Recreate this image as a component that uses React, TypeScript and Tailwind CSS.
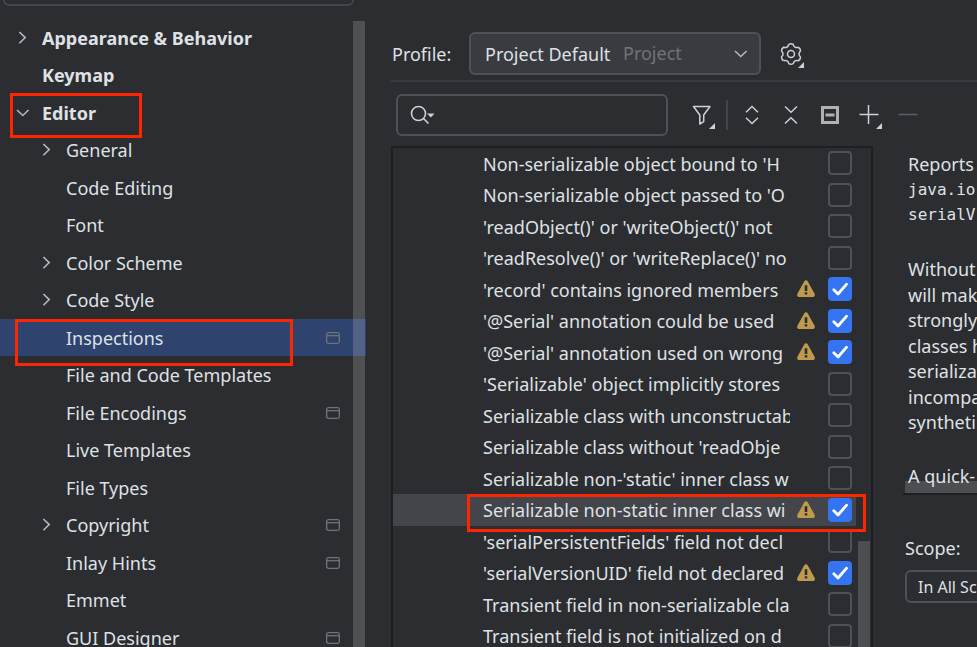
import { useState } from "react";
import type { ReactNode } from "react";

type TreeItem = {
  label: string;
  level: 0 | 1;
  arrow?: "right" | "down";
  project?: boolean;
  selected?: boolean;
  marked?: boolean;
};

const tree: TreeItem[] = [
  { label: "Appearance & Behavior", level: 0, arrow: "right" },
  { label: "Keymap", level: 0 },
  { label: "Editor", level: 0, arrow: "down", marked: true },
  { label: "General", level: 1, arrow: "right" },
  { label: "Code Editing", level: 1 },
  { label: "Font", level: 1 },
  { label: "Color Scheme", level: 1, arrow: "right" },
  { label: "Code Style", level: 1, arrow: "right" },
  { label: "Inspections", level: 1, project: true, selected: true, marked: true },
  { label: "File and Code Templates", level: 1 },
  { label: "File Encodings", level: 1, project: true },
  { label: "Live Templates", level: 1 },
  { label: "File Types", level: 1 },
  { label: "Copyright", level: 1, arrow: "right", project: true },
  { label: "Inlay Hints", level: 1, project: true },
  { label: "Emmet", level: 1 },
  { label: "GUI Designer", level: 1, project: true },
];

type Inspection = { label: string; on?: boolean; selected?: boolean };

const inspections: Inspection[] = [
  { label: "Non-serializable object bound to 'H" },
  { label: "Non-serializable object passed to 'O" },
  { label: "'readObject()' or 'writeObject()' not" },
  { label: "'readResolve()' or 'writeReplace()' no" },
  { label: "'record' contains ignored members", on: true },
  { label: "'@Serial' annotation could be used", on: true },
  { label: "'@Serial' annotation used on wrong", on: true },
  { label: "'Serializable' object implicitly stores" },
  { label: "Serializable class with unconstructab" },
  { label: "Serializable class without 'readObje" },
  { label: "Serializable non-'static' inner class w" },
  { label: "Serializable non-static inner class wi", on: true, selected: true },
  { label: "'serialPersistentFields' field not decl" },
  { label: "'serialVersionUID' field not declared", on: true },
  { label: "Transient field in non-serializable cla" },
  { label: "Transient field is not initialized on d" },
];

const description = [
  { text: "Reports" },
  { text: "java.io", code: true },
  { text: "serialV", code: true },
  { text: "" },
  { text: "Without" },
  { text: "will mak" },
  { text: "strongly" },
  { text: "classes h" },
  { text: "serializa" },
  { text: "incompa" },
  { text: "syntheti" },
  { text: "" },
  { text: "A quick-" },
];

function Chevron({ dir }: { dir: "right" | "down" }) {
  return (
    <svg width="14" height="14" viewBox="0 0 14 14" fill="none" stroke="#b4b8bf" strokeWidth="1.6" className="shrink-0" aria-hidden="true">
      <path d={dir === "right" ? "M3.4 1 9.2 6.6l-5.800 5.700" : "M1 4 6.800 9.500 12.600 4"} />
    </svg>
  );
}

function ProjectIcon() {
  return (
    <svg width="14" height="12" viewBox="0 0 14 12" fill="none" stroke="#6f737a" strokeWidth="1.3" aria-hidden="true">
      <rect x="0.65" y="0.65" width="12.7" height="10.7" rx="1.8" />
      <path d="M1 3.7h12" />
    </svg>
  );
}

function Warning() {
  return (
    <svg width="18" height="18" viewBox="0 0 18 18" className="mb-px" role="img" aria-label="Warning">
      <path d="M7.3 1.300a1.900 1.900 0 0 1 3.400 0l6.900 12.500c.8 1.500-.2 3.200-1.800 3.200H2.200C.6 17-.4 15.300.4 13.800z" fill="#bf9a4c" />
      <path d="M7.700 5.200h2.600v5.700H7.700zM7.700 12.200h2.600v2.300H7.700z" fill="#2b2d30" />
    </svg>
  );
}

const gearTurns = [0, 60, 120, 180, 240, 300];

function IconButton({ label, menu, children }: { label: string; menu?: boolean; children: ReactNode }) {
  return (
    <button type="button" aria-label={label} className="relative flex size-[30px] shrink-0 items-center justify-center">
      <svg width="24" height="24" viewBox="0 0 24 24" fill="none" stroke="#ced0d6" strokeWidth="1.5" aria-hidden="true">
        {children}
      </svg>
      {menu && (
        <svg width="6" height="6" viewBox="0 0 6 6" className="absolute right-0.5 bottom-px" aria-hidden="true">
          <path d="M6 0v6H0z" fill="#ced0d6" />
        </svg>
      )}
    </button>
  );
}

function Sidebar() {
  return (
    <nav aria-label="Settings" className="relative flex w-[366px] shrink-0 flex-col">
      <input aria-label="Search settings" className="-mt-7 mr-3 ml-[3px] h-[34px] shrink-0 rounded-md border-2 border-[#43454a] bg-transparent px-3 outline-none" />
      <ul className="mt-[13px]">
        {tree.map((item) => (
          <li key={item.label} className={`relative odd:h-[37px] even:h-[38px] ${item.selected ? "bg-[#2e436e]" : ""}`}>
            <button
              type="button"
              className={`flex h-full w-full items-center gap-3 pr-[26px] text-left ${item.level === 0 ? "pl-4 font-bold" : "pl-10"}`}
            >
              <span className="flex w-[14px] shrink-0">{item.arrow && <Chevron dir={item.arrow} />}</span>
              <span className="flex-1 whitespace-nowrap">{item.label}</span>
              {item.project && <ProjectIcon />}
            </button>
            {item.marked && item.level === 0 && (
              <span className="pointer-events-none absolute -top-px left-2.5 z-10 h-[45px] w-[132px] border-3 border-[#fe2600]" />
            )}
            {item.marked && item.level === 1 && (
              <span className="pointer-events-none absolute top-0 left-[15px] z-10 h-[47px] w-[278px] border-3 border-[#fe2600]" />
            )}
          </li>
        ))}
      </ul>
      <div className="absolute top-[21px] right-px bottom-0 w-3 bg-white/17" />
    </nav>
  );
}

function InspectionRow({ item }: { item: Inspection }) {
  const [on, setOn] = useState(Boolean(item.on));
  return (
    <li className="relative odd:h-[31px] even:h-8">
      <label className={`mr-[15px] flex h-full items-center pr-1 pl-[90px] ${item.selected ? "bg-[#43454a]" : ""}`}>
        <span className="min-w-0 flex-1 overflow-hidden whitespace-nowrap">{item.label}</span>
        <span className="flex w-[38px] shrink-0 justify-center pr-1.5">{item.on && <Warning />}</span>
        <span className="relative mb-px flex size-6 shrink-0">
          <input
            type="checkbox"
            checked={on}
            onChange={() => setOn(!on)}
            className="size-6 appearance-none rounded-[4px] border-2 border-[#4e5157] checked:border-[#3574f0] checked:bg-[#3574f0]"
          />
          {on && (
            <svg viewBox="0 0 24 24" fill="none" stroke="#fff" strokeWidth="2.8" strokeLinecap="round" strokeLinejoin="round" className="pointer-events-none absolute inset-0 size-6" aria-hidden="true">
              <path d="M5.800 12.800 10 17l8.600-9.800" />
            </svg>
          )}
        </span>
      </label>
      {item.selected && <span className="pointer-events-none absolute top-0 right-[5px] left-[74px] z-10 h-[38px] border-3 border-[#fe2600]" />}
    </li>
  );
}

export default function App() {
  return (
    <div className="flex h-screen gap-[25px] overflow-hidden bg-[#2b2d30] font-['Noto_Sans','Open_Sans',sans-serif] text-[18px] leading-6 text-[#dfe1e5]">
      <Sidebar />
      <main className="flex min-w-0 flex-1 flex-col">
        <div className="flex h-[82px] shrink-0 items-end border-b-2 border-[#393b40] pb-[5px]">
          <label htmlFor="profile" className="mb-[9px] w-[78px] shrink-0 pl-px">Profile:</label>
          <div className="relative h-[43px] w-[292px] shrink-0">
            <select id="profile" className="size-full appearance-none rounded-md border-2 border-[#4e5157] bg-[#393b40] px-[14px] outline-none">
              <option>Project Default</option>
            </select>
            <span className="pointer-events-none absolute top-[9px] left-[154px] text-[#6f737a]">Project</span>
            <span className="pointer-events-none absolute top-[15px] right-[13px]">
              <Chevron dir="down" />
            </span>
          </div>
          <div className="mb-1.5 ml-[15px]">
            <IconButton label="Profile actions" menu>
              {gearTurns.map((turn) => (
                <path key={turn} d="M9.800 2.300Q12 1 14.200 2.300C14.800 5 16.500 6 19.300 5.200" transform={`rotate(${turn} 12 12)`} />
              ))}
              <circle cx="12" cy="12" r="3.500" />
            </IconButton>
          </div>
        </div>

        <div className="flex h-16 shrink-0 items-center pl-[5px]">
          <div className="relative mt-px h-[42px] w-[272px] shrink-0">
            <input aria-label="Search inspections" className="size-full rounded-md border-2 border-[#4e5157] bg-transparent pl-12 outline-none" />
            <svg width="26" height="20" viewBox="0 0 26 20" fill="none" stroke="#ced0d6" strokeWidth="1.600" className="pointer-events-none absolute top-[11px] left-3.5" aria-hidden="true">
              <circle cx="8.500" cy="8.500" r="7" />
              <path d="m13.500 13.500 5 5" />
              <path d="M17 8.500h7.500l-3.700 4z" fill="#ced0d6" stroke="none" />
            </svg>
          </div>
          <div className="mt-0.5 ml-[19px] flex items-center">
            <IconButton label="Filter" menu>
              <path d="M3.500 3.500h16.500l-6.300 8.500v6.700L9.800 21v-9z" strokeLinejoin="round" />
            </IconButton>
            <span className="mx-[9px] h-[30px] w-0.5 bg-[#43454a]" />
            <div className="flex gap-[9px]">
              <IconButton label="Expand all">
                <path d="M6 9.200 12 3.500l6 5.700M6 14.800l6 5.700 6-5.700" />
              </IconButton>
              <IconButton label="Collapse all">
                <path d="M6 3.500l6 5.700 6-5.700M6 20.500l6-5.700 6 5.700" />
              </IconButton>
              <IconButton label="Reset to empty">
                <path d="M4.500 4.500h15v15h-15z" stroke="#afb1b3" strokeWidth="3" />
                <path d="M7.500 12h9" stroke="#afb1b3" strokeWidth="3" />
              </IconButton>
              <IconButton label="Add" menu>
                <path d="M2.500 11.500h19M11.500 2v19" />
              </IconButton>
              <IconButton label="Remove">
                <path d="M2.500 11.500h19" stroke="#5a5d63" />
              </IconButton>
            </div>
          </div>
        </div>

        <div className="flex min-h-0 flex-1 gap-[30px]">
          <section aria-label="Inspections" className="relative w-[482px] shrink-0 overflow-hidden border-2 border-b-0 border-[#1e1f22]">
            <ul>
              {inspections.map((item) => (
                <InspectionRow key={item.label} item={item} />
              ))}
            </ul>
            <div className="absolute top-[393px] right-px bottom-0 w-3 bg-[#4d4e51]" />
          </section>

          <section aria-label="Description" className="min-w-0 flex-1">
            <div className="relative h-[349px] overflow-hidden border-b-2 border-[#1e1f22]">
              <div className="absolute right-0 bottom-0 left-0.5 h-3 bg-[#4d4e51]" />
              <div className="relative pt-1.5 pl-[5px] whitespace-nowrap">
                {description.map((line, i) =>
                  line.text === "" ? (
                    <div key={i} className="h-7" />
                  ) : (
                    <p key={i} className={`odd:h-[26px] even:h-[25px] ${line.code ? "font-['DejaVu_Sans_Mono',monospace] text-[16px]" : ""}`}>
                      {line.text}
                    </p>
                  ),
                )}
              </div>
            </div>
            <div className="pt-[41px] pl-0.5">
              <label htmlFor="scope" className="block">Scope:</label>
              <select id="scope" className="mt-2.5 h-[33px] w-[180px] appearance-none rounded-md border-2 border-[#4e5157] bg-transparent px-[11px] text-[16px] outline-none">
                <option>In All Scopes</option>
              </select>
            </div>
          </section>
        </div>
      </main>
    </div>
  );
}
